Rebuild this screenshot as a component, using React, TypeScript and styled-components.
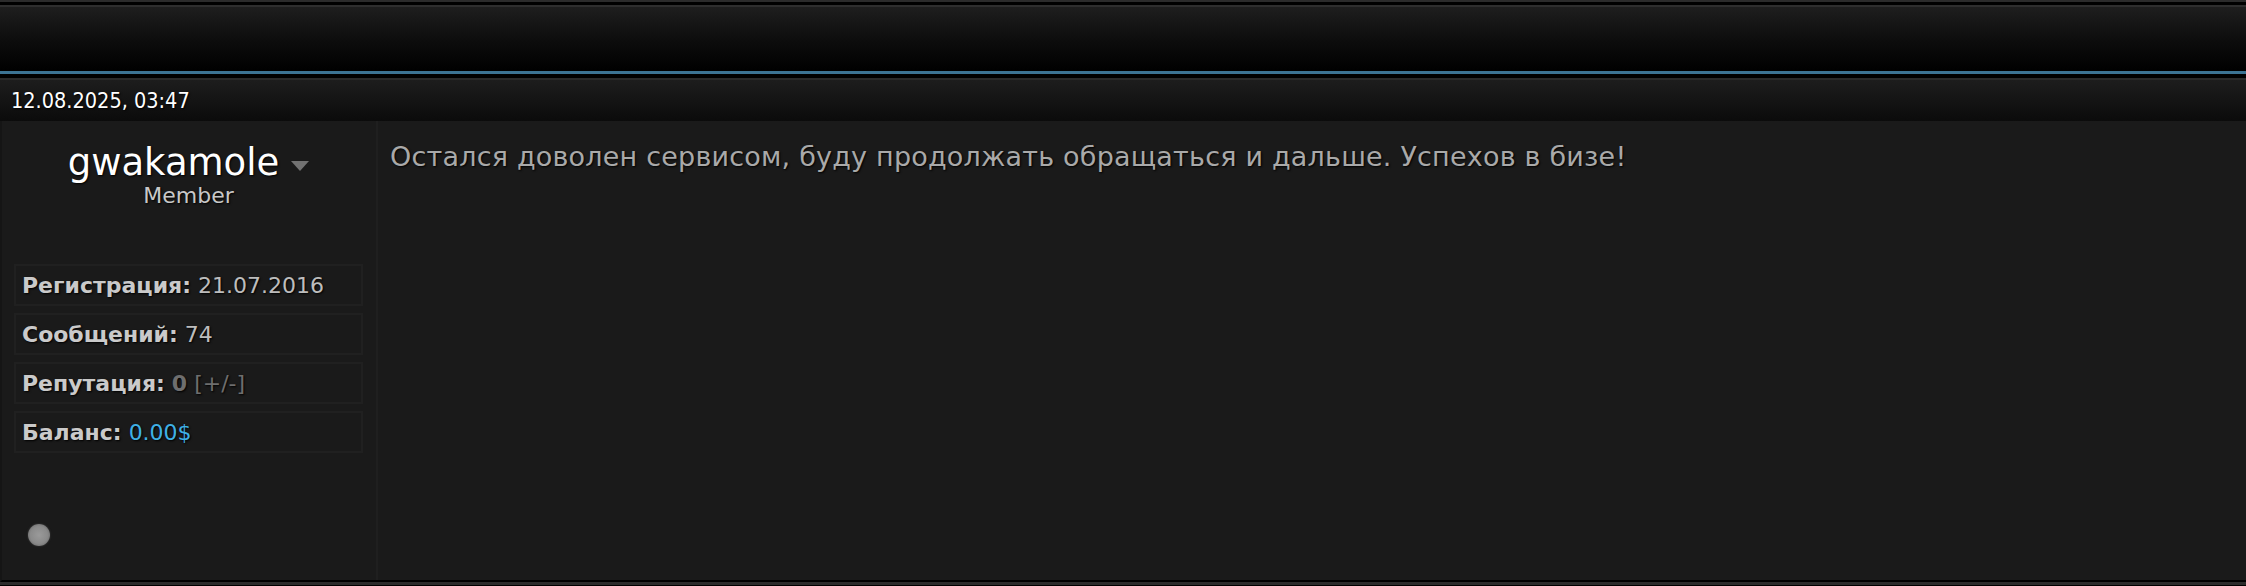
import React from 'react';
import styled, { createGlobalStyle } from 'styled-components';

const GlobalStyle = createGlobalStyle`
  html, body {
    margin: 0;
    padding: 0;
    background: #000;
  }
  body {
    font-family: "DejaVu Sans", Verdana, sans-serif;
  }
`;

const Page = styled.div`
  width: 2246px;
  height: 586px;
  overflow: hidden;
  background: #000;
  border-top: 2px solid #2b2b2b;
  box-sizing: border-box;
`;

const Header = styled.div`
  margin-top: 3px;
  height: 64px;
  border-top: 2px solid #2e2e2e;
  border-bottom: 3px solid #3c7393;
  background: linear-gradient(to bottom, #1e1e1e 0%, #0c0c0c 55%, #000 100%);
`;

const Post = styled.div`
  margin-top: 4px;
  display: flex;
  flex-direction: column;
`;

const PostHead = styled.div`
  height: 41px;
  border-top: 2px solid #2a2a2a;
  background: linear-gradient(to bottom, #1d1d1d 0%, #141414 50%, #0b0b0b 100%);
  display: flex;
  align-items: center;
  padding-left: 11px;
  font-family: "DejaVu Sans Condensed", "DejaVu Sans", sans-serif;
  font-size: 21.5px;
  color: #fff;
  text-shadow: 1px 1px 2px #000;
`;

const PostBody = styled.div`
  display: grid;
  grid-template-columns: 376px 1fr;
  height: 459px;
  background: #1a1a1a;
  border-left: 2px solid #151515;
  border-bottom: 2px solid #000;
`;

const NextPost = styled.div`
  height: 3px;
  background: #2b2b2b;
`;

const Sidebar = styled.div`
  border-right: 2px solid #1f1f1f;
  padding: 22px 13px 0 12px;
  display: flex;
  flex-direction: column;
`;

const UserBlock = styled.div`
  display: flex;
  flex-direction: column;
  align-items: center;
`;

const NameRow = styled.div`
  display: flex;
  align-items: center;
  gap: 12px;
`;

const UserName = styled.span`
  font-size: 37px;
  line-height: 40px;
  color: #fff;
  text-shadow: 1px 1px 2px #000;
`;

const Caret = styled.span`
  width: 0;
  height: 0;
  margin-top: 6px;
  border-left: 9px solid transparent;
  border-right: 9px solid transparent;
  border-top: 10px solid #727272;
`;

const Rank = styled.div`
  font-size: 22px;
  line-height: 26px;
  color: #c8c8c8;
  text-shadow: 1px 1px 2px #000;
`;

const Stats = styled.div`
  margin-top: 55px;
  display: flex;
  flex-direction: column;
  gap: 7px;
`;

const StatRow = styled.div`
  height: 38px;
  border: 2px solid #202020;
  display: flex;
  align-items: center;
  padding-left: 6px;
  font-size: 22px;
  color: #bdbdbd;
  text-shadow: 1px 1px 2px #000;
  white-space: nowrap;
`;

const Label = styled.b`
  color: #cacaca;
  margin-right: 7px;
`;

const Value = styled.span<{ $tone?: 'muted' | 'link' }>`
  color: ${(p) => (p.$tone === 'muted' ? '#6e6e6e' : p.$tone === 'link' ? '#3fb1e6' : '#bdbdbd')};
  font-weight: ${(p) => (p.$tone === 'muted' ? 'bold' : 'normal')};
`;

const Muted = styled.span`
  color: #6e6e6e;
  margin-left: 7px;
`;

const Status = styled.div`
  margin-top: auto;
  margin-bottom: 34px;
  margin-left: 14px;
  width: 22px;
  height: 22px;
  border-radius: 50%;
  background: radial-gradient(circle, #9a9a9a 0%, #8a8a8a 55%, #5a5a5a 100%);
  box-shadow: 0 0 2px #444;
`;

const Content = styled.div`
  padding: 19px 12px;
  font-size: 27px;
  line-height: 34px;
  letter-spacing: 0.2px;
  color: #a9a9a9;
  text-shadow: 1px 1px 2px #000;
`;

export default function App() {
  return (
    <>
      <GlobalStyle />
      <Page>
        <Header />
        <Post>
          <PostHead>12.08.2025, 03:47</PostHead>
          <PostBody>
            <Sidebar>
              <UserBlock>
                <NameRow>
                  <UserName>gwakamole</UserName>
                  <Caret />
                </NameRow>
                <Rank>Member</Rank>
              </UserBlock>
              <Stats>
                <StatRow>
                  <Label>Регистрация:</Label>
                  <Value>21.07.2016</Value>
                </StatRow>
                <StatRow>
                  <Label>Сообщений:</Label>
                  <Value>74</Value>
                </StatRow>
                <StatRow>
                  <Label>Репутация:</Label>
                  <Value $tone="muted">0</Value>
                  <Muted>[+/-]</Muted>
                </StatRow>
                <StatRow>
                  <Label>Баланс:</Label>
                  <Value $tone="link">0.00$</Value>
                </StatRow>
              </Stats>
              <Status />
            </Sidebar>
            <Content>
              Остался доволен сервисом, буду продолжать обращаться и дальше. Успехов в бизе!
            </Content>
          </PostBody>
          <NextPost />
        </Post>
      </Page>
    </>
  );
}
